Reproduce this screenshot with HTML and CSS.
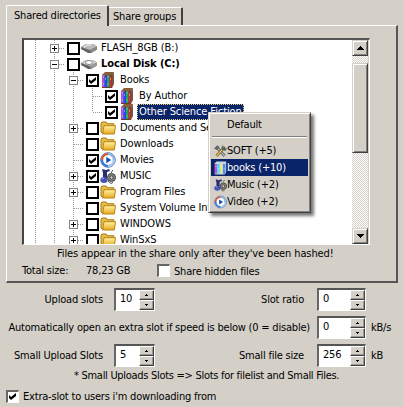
FILE: index.html
```
<!DOCTYPE html>
<html lang="en">
<head>
<meta charset="utf-8">
<title>Sharing</title>
<link rel="stylesheet" href="styles.css">
</head>
<body>
<svg class="defs" width="0" height="0">
<defs>
<linearGradient id="gold" x1="0" y1="0" x2="0" y2="1"><stop offset="0" stop-color="#fff3a0"/><stop offset="1" stop-color="#e8a820"/></linearGradient>
<symbol id="folder" viewBox="0 0 16 16"><path d="M1 3.200l1-1.200h4l1.600 1.800H14v9.700H2.500L1 12z" fill="#e9bd4a" stroke="#a97a14"/><path d="M4 5.700h11.500L14.300 14H2.600z" fill="url(#gold)" stroke="#b98716"/></symbol>
<symbol id="drive" viewBox="0 0 16 16"><path d="M0 7l5-3h7l4 2.500v3L10 13H7L0 9z" fill="#666"/><path d="M0 7l5-3h7l4 2.500L9 10z" fill="#bbb"/><path d="M9 10l7-3.500v3L10 13z" fill="#888"/><path d="M3 7l3-2h4" stroke="#f5f5f5" fill="none"/></symbol>
<symbol id="disk" viewBox="0 0 16 16"><path d="M0 7l5-3h7l4 2.500v3L10 13H7L0 9z" fill="#666"/><path d="M0 7l5-3h7l4 2.500L9 10z" fill="#ccc"/><path d="M9 10l7-3.500v3L10 13z" fill="#999"/><ellipse cx="8" cy="6.500" rx="3.500" ry="2" fill="#fff" stroke="#888"/></symbol>
<symbol id="books" viewBox="0 0 16 16"><path d="M2 3l3-3h9l-2 3z" fill="#8a5a3c"/><path d="M12 3l2-3v12l-2 4z" fill="#7c5442"/><path d="M2 3h10v13H2z" fill="#6a3b2a"/><path d="M2 3h3v12H2z" fill="#a455dc"/><path d="M4.500 4h2.500v11h-2.500z" fill="#2449e8"/><path d="M7 3h2.500v12H7z" fill="#19a36a"/><path d="M9.500 4h2v11h-2z" fill="#c9363d"/><path d="M3 5h1M5 7h1M7.500 5h1M10 7h1M3 12h1M7.500 12h1" stroke="#efe06a"/></symbol>
<symbol id="movie" viewBox="0 0 16 16"><circle cx="8" cy="8" r="7.300" fill="#c8dcf4" stroke="#557cb8"/><path d="M8 2a6 6 0 0 0-6 6" fill="none" stroke="#e2552c" stroke-width="2"/><path d="M8 2a6 6 0 0 1 6 6" fill="none" stroke="#8cb8e8" stroke-width="2"/><path d="M2 8a6 6 0 0 0 6 6" fill="none" stroke="#3a78d8" stroke-width="2"/><path d="M14 8a6 6 0 0 1-6 6" fill="none" stroke="#a9c8ec" stroke-width="2"/><circle cx="8" cy="8" r="4.500" fill="#fff"/><path d="M6.300 4.800v6.400L11.200 8z" fill="#164fb8"/></symbol>
<symbol id="music" viewBox="0 0 16 16"><path d="M2 1l4 1 3-1 1 2-3 1v9H3V5z" fill="#27306e"/><ellipse cx="4" cy="12" rx="3.700" ry="3" fill="#4553b8"/><path d="M2 11l2-1" stroke="#a9b4f5"/><circle cx="11.500" cy="9.500" r="4" fill="#8e8e88" stroke="#3b3b38"/><circle cx="11.500" cy="9.500" r="1.700" fill="#ddd" stroke="#333"/><path d="M8 13l3 2.500 2-1M11 5l2-3" stroke="#555" fill="none"/></symbol>
<symbol id="tools" viewBox="0 0 16 16"><path d="M3 3l10 11" stroke="#444" stroke-width="3.400"/><path d="M3 3l10 11" stroke="#bcc" stroke-width="1.600"/><path d="M13 3L3 14" stroke="#6a5020" stroke-width="3.400"/><path d="M12 4L3 14" stroke="#f6b857" stroke-width="1.800"/><path d="M0 5l4-4 3 2-3 4z" fill="#666"/><path d="M10 0l1 4 5 1-2 3-5-2z" fill="#456b68"/></symbol>
<symbol id="booksel" viewBox="0 0 16 16"><path d="M1 2l2-2h12v13l-2 3H1z" fill="#cfd5dc"/><path d="M1 3h3v12H1z" fill="#c44ee0"/><path d="M4 3h3v12H4z" fill="#3de0ec"/><path d="M8 3h2v12H8z" fill="#f2ed62"/><path d="M11 3h3v12h-3z" fill="#4c8fe8"/><path d="M2 6h1M5 9h1M8 6h1M12 9h1M5 13h1" stroke="#fff"/></symbol>
</defs>
</svg>

<div class="window">
  <div class="tabs">
    <div class="tab active"><span>Shared directories</span></div>
    <div class="tab"><span>Share groups</span></div>
  </div>
  <div class="panel">
    <div class="tree">
      <div class="rows">
        <div class="row"><i class="c v"></i><i class="c t"><b class="ex plus"></b></i><i class="cb"></i><svg><use href="#drive"/></svg><span>FLASH_8GB (B:)</span></div>
        <div class="row"><i class="c v"></i><i class="c t"><b class="ex"></b></i><i class="cb"></i><svg><use href="#disk"/></svg><span class="bold">Local Disk (C:)</span></div>
        <div class="row"><i class="c v"></i><i class="c v"></i><i class="c t"><b class="ex"></b></i><i class="cb on"></i><svg><use href="#books"/></svg><span>Books</span></div>
        <div class="row"><i class="c v"></i><i class="c v"></i><i class="c v"></i><i class="c t"></i><i class="cb on"></i><svg><use href="#books"/></svg><span>By Author</span></div>
        <div class="row"><i class="c v"></i><i class="c v"></i><i class="c v"></i><i class="c l"></i><i class="cb on"></i><svg><use href="#books"/></svg><span class="selected">Other Science Fiction</span></div>
        <div class="row"><i class="c v"></i><i class="c v"></i><i class="c t"><b class="ex plus"></b></i><i class="cb"></i><svg><use href="#folder"/></svg><span>Documents and Settings</span></div>
        <div class="row"><i class="c v"></i><i class="c v"></i><i class="c t"></i><i class="cb"></i><svg><use href="#folder"/></svg><span>Downloads</span></div>
        <div class="row"><i class="c v"></i><i class="c v"></i><i class="c t"></i><i class="cb on"></i><svg><use href="#movie"/></svg><span>Movies</span></div>
        <div class="row"><i class="c v"></i><i class="c v"></i><i class="c t"><b class="ex plus"></b></i><i class="cb on"></i><svg><use href="#music"/></svg><span>MUSIC</span></div>
        <div class="row"><i class="c v"></i><i class="c v"></i><i class="c t"><b class="ex plus"></b></i><i class="cb"></i><svg><use href="#folder"/></svg><span>Program Files</span></div>
        <div class="row"><i class="c v"></i><i class="c v"></i><i class="c t"></i><i class="cb"></i><svg><use href="#folder"/></svg><span>System Volume Inf</span></div>
        <div class="row"><i class="c v"></i><i class="c v"></i><i class="c t"><b class="ex plus"></b></i><i class="cb"></i><svg><use href="#folder"/></svg><span>WINDOWS</span></div>
        <div class="row"><i class="c v"></i><i class="c v"></i><i class="c t"><b class="ex plus"></b></i><i class="cb"></i><svg><use href="#folder"/></svg><span>WinSxS</span></div>
      </div>
      <div class="scroll">
        <div class="btn"><svg viewBox="0 0 7 4"><path d="M3 0h1v1h1v1h1v1h1v1H0V3h1V2h1V1h1z"/></svg></div>
        <div class="gap"></div>
        <div class="thumb"></div>
        <div class="track"></div>
        <div class="btn"><svg viewBox="0 0 7 4"><path d="M0 0h7v1H6v1H5v1H4v1H3V3H2V2H1V1H0z"/></svg></div>
      </div>
    </div>
    <div class="note"><span>Files appear in the share only after they've been hashed!</span></div>
    <div class="total">
      <span class="tl">Total size:</span><span class="tv">78,23 GB</span><i class="check"></i><span class="hidden-files">Share hidden files</span>
    </div>
  </div>
  <div class="form">
    <div class="line"><label>Upload slots</label><div class="spin"><span>10</span><div class="ud"><i></i><i></i></div></div><label class="right">Slot ratio</label><div class="spin wide"><span>0</span><div class="ud"><i></i><i></i></div></div></div>
    <div class="line"><label class="long">Automatically open an extra slot if speed is below (0 = disable)</label><div class="spin wide"><span>0</span><div class="ud"><i></i><i></i></div></div><span class="unit">kB/s</span></div>
    <div class="line last"><label>Small Upload Slots</label><div class="spin"><span>5</span><div class="ud"><i></i><i></i></div></div><label class="right">Small file size</label><div class="spin wide"><span>256</span><div class="ud"><i></i><i></i></div></div><span class="unit">kB</span></div>
    <div class="hint">* Small Uploads Slots =&gt; Slots for filelist and Small Files.</div>
    <div class="extra"><i class="check on"></i><span>Extra-slot to users i'm downloading from</span></div>
  </div>
  <div class="menu">
    <div class="item first">Default</div>
    <div class="sep"></div>
    <div class="item"><svg><use href="#tools"/></svg>SOFT (+5)</div>
    <div class="item hot"><svg><use href="#booksel"/></svg>books (+10)</div>
    <div class="item"><svg><use href="#music"/></svg>Music (+2)</div>
    <div class="item"><svg><use href="#movie"/></svg>Video (+2)</div>
  </div>
</div>
</body>
</html>
```
FILE: styles.css
```
* { box-sizing: border-box; }
body { margin: 0; background: #d4d0c8; color: #000; font: 11px/16px "DejaVu Sans Condensed", "DejaVu Sans", sans-serif; font-stretch: condensed; letter-spacing: -0.2px; white-space: nowrap; }
.defs { position: absolute; }
.window { position: relative; width: 404px; height: 407px; overflow: hidden; }
i { font-style: normal; display: block; flex: none; }
svg { flex: none; }

.tabs { display: flex; align-items: flex-end; height: 25px; padding-left: 6px; }
.tab { height: 18px; width: 74px; border-top: 1px solid #fff; border-right: 2px solid #404040; border-top-right-radius: 2px; padding: 0 0 0 4px; line-height: 18px; }
.tab.active { height: 21px; width: 103px; margin-bottom: -1px; border-left: 1px solid #fff; border-radius: 2px 2px 0 0; padding-left: 7px; line-height: 20px; background: #d4d0c8; position: relative; }
.panel { margin-left: 6px; width: 392px; height: 258px; border: 1px solid #fff; border-right: 2px solid #555; border-bottom: 2px solid #555; padding: 12px 0 0 15px; }
.tree { display: flex; width: 348px; height: 207px; background: #fff; border: 2px solid #444; border-top-color: #555; border-right: 1px solid #fff; border-bottom: 1px solid #fff; }
.rows { flex: 1; overflow: hidden; padding-left: 2px; letter-spacing: -0.1px; }
.row { display: flex; height: 16px; align-items: center; }
.row svg { width: 16px; height: 16px; margin: 0 4px 0 1px; }
.c { width: 19px; height: 16px; position: relative; --d: #999 0 1px, transparent 1px 2px; }
.v { background: repeating-linear-gradient(180deg, var(--d)) 9px 0 / 1px 16px no-repeat; }
.t { background: repeating-linear-gradient(180deg, var(--d)) 9px 0 / 1px 16px no-repeat, repeating-linear-gradient(90deg, var(--d)) 10px 8px / 9px 1px no-repeat; }
.l { background: repeating-linear-gradient(180deg, var(--d)) 9px 0 / 1px 8px no-repeat, repeating-linear-gradient(90deg, var(--d)) 10px 8px / 9px 1px no-repeat; }
.ex { position: absolute; left: 5px; top: 4px; width: 9px; height: 9px; border: 1px solid #848484; background: linear-gradient(#000, #000) 1px 3px / 5px 1px no-repeat, #fff; }
.ex.plus { background: linear-gradient(#000, #000) 1px 3px / 5px 1px no-repeat, linear-gradient(#000, #000) 3px 1px / 1px 5px no-repeat, #fff; }
.cb { width: 13px; height: 13px; border: 2px solid #000; background: #fff; margin: 1px 0 0 3px; position: relative; }
.cb.on::after, .check.on::after { content: ""; position: absolute; left: 1px; top: 1px; width: 7px; height: 7px; background: #000; clip-path: polygon(0 29%, 29% 58%, 100% 0, 100% 43%, 29% 100%, 0 71%); }
.bold { font-weight: bold; letter-spacing: -0.1px; }
.selected { background: #0a246a; color: #fff; margin-left: -2px; padding: 0 2px; height: 16px; outline: 1px dotted #e8d080; outline-offset: -1px; }

.scroll { width: 17px; display: flex; flex-direction: column; background: #d4d0c8; padding-right: 1px; }
.btn, .thumb { border: 1px solid #d4d0c8; border-right-color: #404040; border-bottom-color: #404040; box-shadow: inset 1px 1px #fff, inset -1px -1px #808080; background: #d4d0c8; }
.btn { height: 16px; display: flex; align-items: center; justify-content: center; }
.btn svg { width: 7px; height: 4px; }
.gap, .track { background: repeating-conic-gradient(#d4d0c8 0 25%, #fff 0 50%) 0 0 / 2px 2px; }
.gap { height: 7px; }
.thumb { height: 90px; }
.track { flex: 1; }

.note { padding-left: 35px; height: 17px; line-height: 17px; letter-spacing: -0.12px; }
.total { display: flex; height: 18px; line-height: 17px; }
.tl { width: 64px; }
.tv { width: 71px; }
.check { width: 13px; height: 13px; margin: 2px 4px 0 0; background: #fff; border: 1px solid #666; border-top: 2px solid #666; border-left: 2px solid #666; border-right-color: #fff; border-bottom-color: #fff; position: relative; }
.hidden-files { line-height: 19px; }

.form { padding-top: 5px; }
.line { display: flex; height: 28px; }
.line.last { height: 24px; }
.line label { flex: none; width: 103px; text-align: right; line-height: 24px; }
.line .right { width: 149px; }
.line .long { width: 310px; }
.line .spin { flex: none; margin-left: 11px; }
.line .right + .wide { margin-left: 13px; }
.line .long + .wide { margin-left: 7px; }
.spin { display: flex; width: 41px; height: 23px; background: #fff; border: 2px solid #555; border-left-color: #666; border-right: 1px solid #fff; border-bottom: 1px solid #fff; justify-content: space-between; }
.spin.wide { width: 49px; }
.spin span { padding-left: 4px; line-height: 17px; }
.ud { width: 15px; background: #d4d0c8; }
.ud i { height: 10px; border: 1px solid #fff; border-right-color: #404040; border-bottom-color: #404040; box-shadow: inset -1px -1px #999; background: linear-gradient(#000, #000) 6px 3px / 1px 1px no-repeat, linear-gradient(#000, #000) 5px 4px / 3px 1px no-repeat; }
.ud i + i { background: linear-gradient(#000, #000) 5px 3px / 3px 1px no-repeat, linear-gradient(#000, #000) 6px 4px / 1px 1px no-repeat; }
.unit { padding-left: 5px; line-height: 24px; }
.hint { padding-left: 74px; line-height: 16px; height: 21px; letter-spacing: -0.29px; }
.extra { display: flex; padding-left: 6px; }
.extra .check { margin: 1px 4px 0 0; }

.menu { position: absolute; left: 208px; top: 112px; width: 103px; height: 101px; padding: 2px; background: #d4d0c8; border: 1px solid #d4d0c8; border-right-color: #404040; border-bottom-color: #404040; box-shadow: inset 1px 1px #fff, inset -1px -1px #808080, 3px 3px 3px #0008; }
.item { display: flex; height: 17px; line-height: 17px; align-items: center; padding-left: 3px; }
.item svg { width: 13px; height: 14px; }
.item.first { padding: 0 0 3px 16px; height: 21px; }
.sep { height: 2px; margin: 0 1px 4px; border-top: 1px solid #808080; border-bottom: 1px solid #fff; }
.hot { background: #0a246a; color: #fff; }
```
